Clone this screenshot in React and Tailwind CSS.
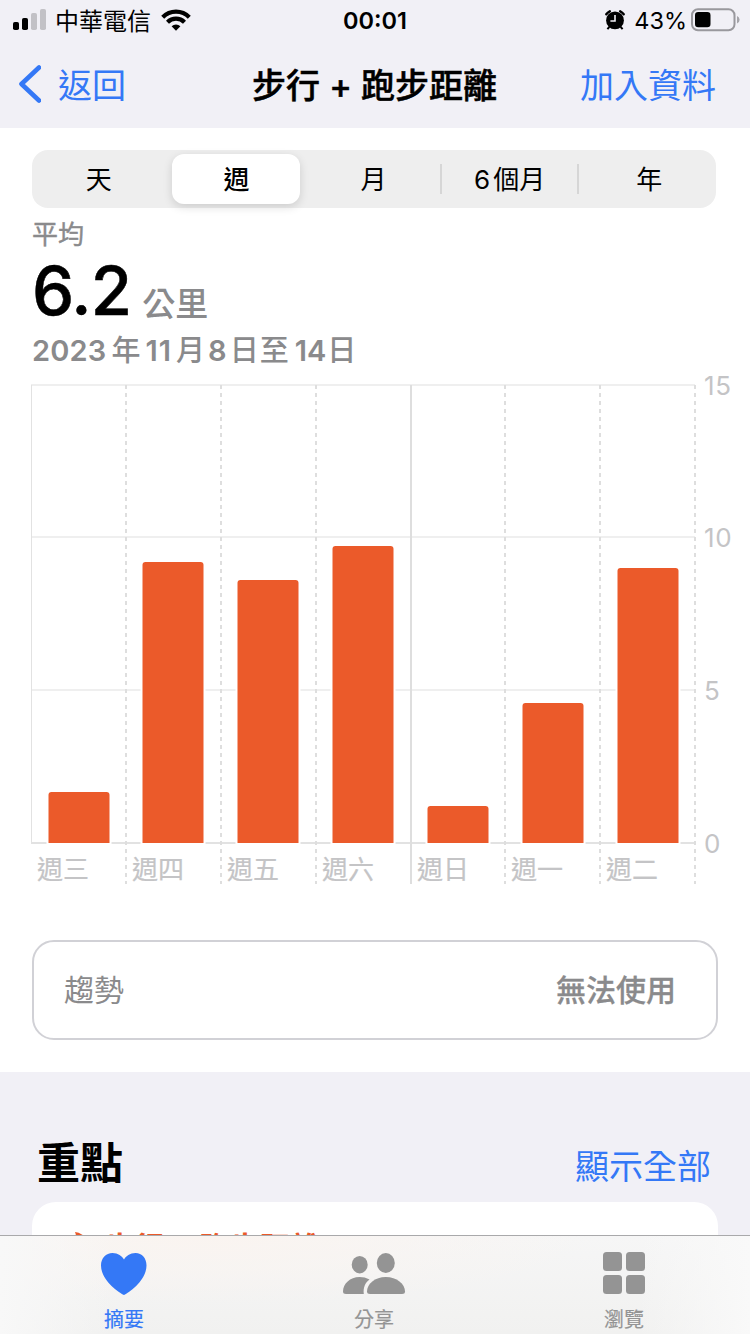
import clsx from "clsx";

const RANGES = ["天", "週", "月", "6個月", "年"];

// x = left edge of the bar, y = top edge, both in chart units
const BARS = [
  { day: "週三", x: 48.5, y: 792, labelX: 37 },
  { day: "週四", x: 142.5, y: 562, labelX: 132 },
  { day: "週五", x: 237.5, y: 580, labelX: 227 },
  { day: "週六", x: 332.5, y: 546, labelX: 322 },
  { day: "週日", x: 427.5, y: 806, labelX: 417 },
  { day: "週一", x: 522.5, y: 703, labelX: 511 },
  { day: "週二", x: 617.5, y: 568, labelX: 606 },
];

const ROWS = [
  { value: 15, y: 385 },
  { value: 10, y: 537 },
  { value: 5, y: 690 },
  { value: 0, y: 843 },
];

const DASHED = [126, 221, 316, 505, 600, 695];
const BASE = 843;

function StatusBar() {
  return (
    <div className="grid h-10 grid-cols-3 items-center">
      <div className="flex items-center pl-[13px]">
        <svg className="h-[22px] w-[33px]" viewBox="0 0 33 22">
          <rect x="0" y="13" width="6" height="8" rx="1.8" />
          <rect x="9" y="9" width="6" height="12" rx="1.8" />
          <rect x="18" y="4" width="6" height="17" rx="1.8" fill="#c2c1c6" />
          <rect x="27" y="0" width="6" height="21" rx="1.8" fill="#c2c1c6" />
        </svg>
        <span className="ml-[9px] pt-[3px] text-[24px] leading-none">中華電信</span>
        <svg className="ml-[10px] h-[22px] w-[30px]" viewBox="0 0 30 22">
          <g fill="none" stroke="#000" strokeWidth="4.2">
            <path d="M1.7 8.2a18.8 18.8 0 0 1 26.6 0" />
            <path d="M6.5 13.2a12 12 0 0 1 17 0" />
          </g>
          <path d="M10.6 17.2a6.5 6.5 0 0 1 8.8 0L15 21.8z" />
        </svg>
      </div>
      <div className="pt-0.5 text-center text-[23.5px] font-semibold leading-none">00:01</div>
      <div className="flex items-center justify-end pr-[10px]">
        <svg className="h-5 w-5" viewBox="0 0 20 20">
          <circle cx="10" cy="10.4" r="8.9" />
          <path d="M1.3 4.2A9 9 0 0 1 4.8 1.3M18.7 4.2A9 9 0 0 0 15.2 1.3" fill="none" stroke="#000" strokeWidth="2.4" strokeLinecap="round" />
          <path d="M2.4 19.2l2-2.4M17.6 19.2l-2-2.4" stroke="#000" strokeWidth="2" />
          <path d="M10 5v6H5.4" fill="none" stroke="#f1f0f6" strokeWidth="1.6" />
        </svg>
        <span className="ml-[9px] pt-0.5 text-[23.5px] leading-none">43%</span>
        <svg className="ml-1 h-6 w-[49px]" viewBox="0 0 49 24">
          <rect x="1" y="1.2" width="42.5" height="21" rx="6" fill="none" stroke="#99989d" strokeWidth="2" />
          <rect x="4" y="4" width="15.5" height="15.3" rx="3.2" />
          <path d="M46 8q2.6 1.2 2.6 3.8t-2.6 3.8z" fill="#a5a4a9" />
        </svg>
      </div>
    </div>
  );
}

function NavBar() {
  return (
    <div className="flex h-[88px] items-center justify-between pl-[18px] pr-[34px] text-[34px] leading-none text-[#3478f6]">
      <div className="flex w-[217px] items-center">
        <svg className="h-10 w-[23px]" viewBox="0 0 23 40">
          <path d="M21 3.5 3.5 20l17.500 16.5" fill="none" stroke="#3478f6" strokeWidth="4.6" strokeLinecap="round" strokeLinejoin="round" />
        </svg>
        <span className="ml-[17px] pt-[3px]">返回</span>
      </div>
      <h1 className="whitespace-nowrap pt-[3px] font-medium text-black [-webkit-text-stroke:0.5px]">步行 + 跑步距離</h1>
      <span className="w-[202px] pt-[3px] text-right">加入資料</span>
    </div>
  );
}

function RangePicker({ selected }) {
  return (
    <div className="mx-8 h-[58px] w-[684px] rounded-2xl bg-[#eeeeee]">
      <div className="-mx-0.5 flex h-full">
        {RANGES.map((range, i) => (
          <div key={range} className="flex h-full flex-1 items-center">
            <div
              className={clsx(
                "flex h-[50px] flex-1 items-center justify-center pt-0.5 text-[26px] leading-none",
                range === selected &&
                  "mx-[4.8px] rounded-xl bg-white font-medium shadow-[0_3px_10px_rgba(0,0,0,0.14)]"
              )}
            >
              {range === "6個月" ? (
                <>
                  <span className="-ml-[3px] mr-[3px]">6</span>個月
                </>
              ) : (
                range
              )}
            </div>
            {(i === 2 || i === 3) && <div className="-ml-0.5 mr-px h-[30px] w-0.5 bg-[#d6d6d6]" />}
          </div>
        ))}
      </div>
    </div>
  );
}

function Summary() {
  return (
    <div className="h-[158px] pl-8 pt-3 text-[#8a8a8c]">
      <div className="h-[30px] text-[26px] leading-[30px] [-webkit-text-stroke:0.4px]">平均</div>
      <div className="flex h-[78px] items-baseline">
        <span className="text-[67px] font-medium leading-[82px] tracking-[-0.8px] text-black [-webkit-text-stroke:0.5px]">6.2</span>
        <span className="relative top-px ml-[11px] text-[33px] font-medium leading-none">公里</span>
      </div>
      <div className="flex h-[38px] items-center pt-[7px] text-[29px] font-medium leading-none">
        <span className="font-semibold tracking-[0.2px]">2023</span>
        <span className="ml-[5px]">年</span>
        <span className="ml-[5px] font-semibold tracking-[1px]">11</span>
        <span className="ml-1">月</span>
        <span className="ml-[3px] font-semibold">8</span>
        <span className="ml-[3px] tracking-[1px]">日至</span>
        <span className="ml-[5px] font-semibold">14</span>
        <span className="ml-px">日</span>
      </div>
    </div>
  );
}

function Chart() {
  return (
    <svg className="block h-[524px] w-[750px]" viewBox="0 366 750 524">
      {ROWS.map((row) => (
        <g key={row.value}>
          <path d={`M31 ${row.y}H695`} stroke={row.value === 0 ? "#e2e2e2" : "#efefef"} strokeWidth="2" />
          <text x="704" y={row.y + 10} fontSize="26" letterSpacing="0.7" fill="#c4c4c6">
            {row.value}
          </text>
        </g>
      ))}
      <path d="M31.5 385V843" stroke="#e2e2e2" strokeWidth="1" />
      <path d="M411 385V884" stroke="#dedede" strokeWidth="2" />
      {DASHED.map((x) => (
        <path key={x} d={`M${x} 385V884`} stroke="#dedede" strokeWidth="2" strokeDasharray="4 4" />
      ))}
      {BARS.map((bar) => (
        <g key={bar.day}>
          <path d={`M${bar.x - 2} ${BASE + 1}V${bar.y}h65V${BASE + 1}z`} fill="#fff" />
          <path
            d={`M${bar.x} ${BASE}V${bar.y + 3}q0-3 3-3h55q3 0 3 3V${BASE}z`}
            fill="#eb5a2a"
          />
          <text x={bar.labelX} y="879" fontSize="26" fill="#c4c4c6" stroke="#c4c4c6" strokeWidth="0.2">
            {bar.day}
          </text>
        </g>
      ))}
    </svg>
  );
}

function Trend() {
  return (
    <div className="mx-8 mt-[50px] flex h-[100px] items-center justify-between rounded-[22px] border-2 border-[#d1d1d6] pl-[30px] pr-10 text-[30px] leading-none text-[#8a8a8c]">
      <span>趨勢</span>
      <span className="font-medium [-webkit-text-stroke:0.3px]">無法使用</span>
    </div>
  );
}

function Highlights() {
  return (
    <div className="h-[163px] overflow-hidden bg-[#f1f0f6] px-8 pt-[62px]">
      <div className="flex h-[68px] items-center justify-between pl-[5px] pr-[7px]">
        <h2 className="pb-[9px] text-[43px] font-bold leading-none">重點</h2>
        <span className="pb-0.5 text-[34px] leading-none text-[#3478f6]">顯示全部</span>
      </div>
      <div className="flex h-[200px] items-start rounded-t-[24px] bg-white pl-9 pt-[28px] text-[#eb5a2a]">
        <svg className="mt-0.5 h-7 w-7" viewBox="0 0 28 28">
          <path d="M7 0q4 0 9 4l8 9q-1 12-10 12T4 14Q10 7 7 0z" fill="#eb5a2a" />
        </svg>
        <span className="ml-2 pt-0.5 text-[30px] font-semibold leading-none">步行 + 跑步距離</span>
      </div>
    </div>
  );
}

function Tab({ label, active, children }) {
  return (
    <div className={clsx("flex w-[250px] flex-col items-center pr-[2px] pt-[14px]", active ? "text-[#3478f6]" : "text-[#949494]")}>
      <svg className="h-[46px] w-[64px]" viewBox="0 0 64 46" fill="currentColor">
        {children}
      </svg>
      <span className="mt-[14px] text-[20px] leading-none [-webkit-text-stroke:0.2px]">{label}</span>
    </div>
  );
}

function TabBar() {
  return (
    <div className="flex h-[99px] border-t border-[#a9a9ab] bg-[linear-gradient(to_right,#f8f8f8_0%,#f8f8f800_15%,#f8f8f800_85%,#f9f9f9_100%),radial-gradient(ellipse_at_28%_0%,#faf4f0_0%,#faf4f000_50%),linear-gradient(#f6f6f6,#f1f1f0)]">
      <Tab label="摘要" active>
        <path d="M32 45C26 42 9 30 9 15.5C9 8 14 3 20.5 3C26 3 30 6 32 9.5C34 6 38 3 43.5 3C50 3 54.5 8 54.5 15.5C54.5 30 38 42 32 45z" />
      </Tab>
      <Tab label="分享">
        <ellipse cx="17.7" cy="14.7" rx="8" ry="8.7" />
        <ellipse cx="43.8" cy="13" rx="9" ry="10" />
        <path d="M1 41.5C1 34 8 27 17.5 27C21 27 24.5 27.8 27.5 29.5C23.5 32.5 21 37 21.8 44H4Q1 44 1 41.5z" />
        <path d="M25 41.5C25 34 33 27 43.8 27S63 34 63 41.5Q63 44 60 44H28Q25 44 25 41.5z" />
      </Tab>
      <Tab label="瀏覽">
        <rect x="11" y="2" width="19" height="19" rx="3.5" />
        <rect x="34" y="2" width="19" height="19" rx="3.5" />
        <rect x="11" y="25" width="19" height="19" rx="3.5" />
        <rect x="34" y="25" width="19" height="19" rx="3.5" />
      </Tab>
    </div>
  );
}

export default function App() {
  return (
    <div className="flex h-[1334px] w-[750px] flex-col overflow-hidden bg-white font-[Inter,'Noto_Sans_CJK_TC',sans-serif] text-black">
      <header className="h-32 bg-[#f1f0f6]">
        <StatusBar />
        <NavBar />
      </header>
      <main className="h-[944px] pt-[22px]">
        <RangePicker selected="週" />
        <Summary />
        <Chart />
        <Trend />
      </main>
      <Highlights />
      <TabBar />
    </div>
  );
}
